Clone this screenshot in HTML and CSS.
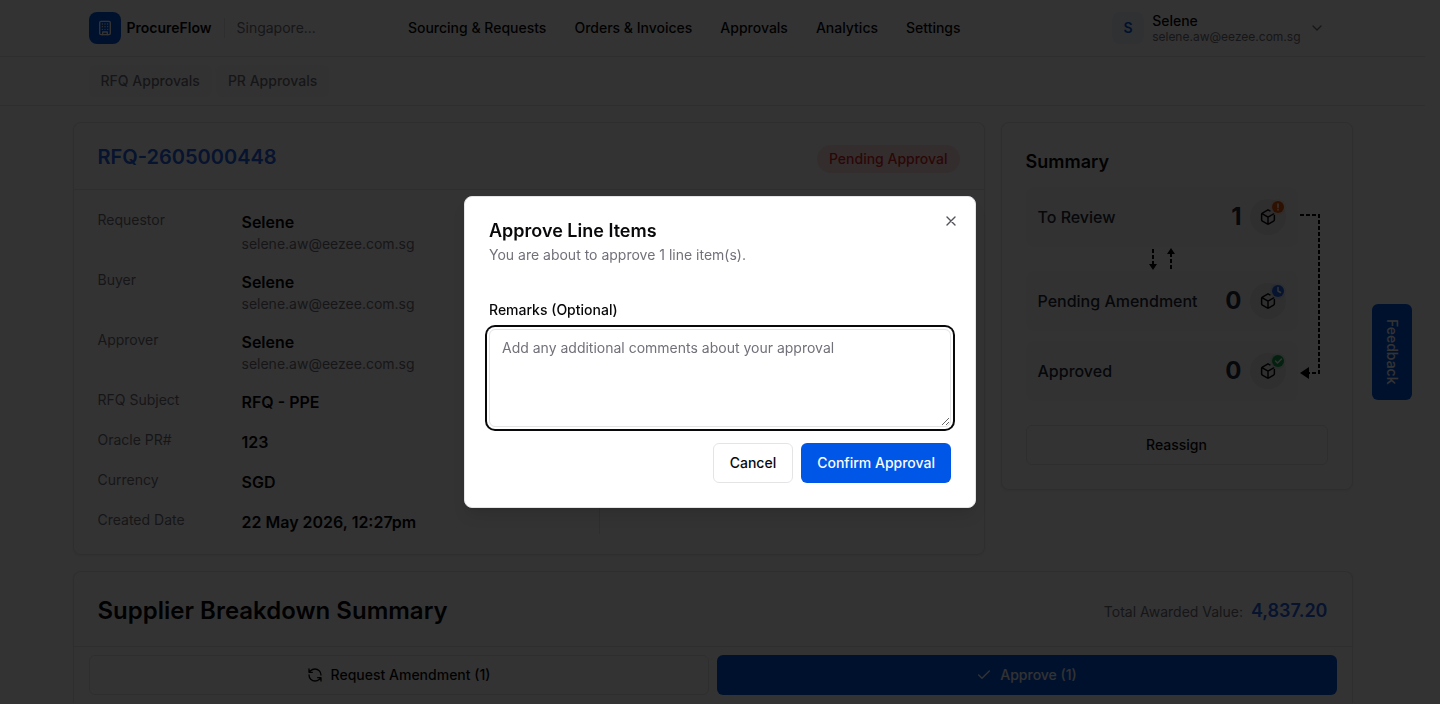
FILE: index.html
```html
<!DOCTYPE html>
<html lang="en">
<head>
<meta charset="utf-8">
<meta name="viewport" content="width=device-width, initial-scale=1">
<title>ProcureFlow – RFQ-2605000448</title>
<link rel="stylesheet" href="styles.css">
</head>
<body>
<svg class="defs" aria-hidden="true">
  <symbol id="box" viewBox="0 0 24 24"><path d="M12 2.500 4.500 6.800A2 2 0 0 0 3.500 8.500v7.300a2 2 0 0 0 1 1.700L11 21.200a2 2 0 0 0 2 0l6.500-3.700a2 2 0 0 0 1-1.700V10M4 7.600l8 4.600 7.500-4.300M12 21.500v-9.300M12 2.500l2.500 1.300"/></symbol>
</svg>
<div class="page">
  <header class="topbar">
    <div class="wrap topbar-inner">
      <div class="brand">
        <span class="logo"><svg viewBox="0 0 24 24"><rect x="4" y="2" width="16" height="20" rx="2"/><path d="M8.500 22v-4h7v4M8 6h.01M16 6h.01M12 6h.01M12 10h.01M12 14h.01M16 10h.01M16 14h.01M8 10h.01M8 14h.01"/></svg></span>
        <span class="brand-name">ProcureFlow</span>
        <span class="brand-org">Singapore...</span>
      </div>
      <nav class="nav">
        <a href="#">Sourcing &amp; Requests</a><a href="#">Orders &amp; Invoices</a><a href="#">Approvals</a><a href="#">Analytics</a><a href="#">Settings</a>
      </nav>
      <button class="user" type="button">
        <span class="avatar">S</span>
        <span class="user-text"><span class="user-name">Selene</span><span class="user-mail">selene.aw@eezee.com.sg</span></span>
        <svg class="chevron" viewBox="0 0 24 24"><path d="m6 9 6 6 6-6"/></svg>
      </button>
    </div>
  </header>
  <div class="subbar">
    <nav class="wrap tabs"><a href="#">RFQ Approvals</a><a href="#">PR Approvals</a></nav>
  </div>
  <main class="main">
    <div class="columns">
      <section class="card">
        <div class="card-head">
          <h1 class="rfq">RFQ-2605000448</h1>
          <span class="badge">Pending Approval</span>
        </div>
        <div class="details">
          <dl class="fields">
            <div class="field"><dt>Requestor</dt><dd>Selene<small>selene.aw@eezee.com.sg</small></dd></div>
            <div class="field"><dt>Buyer</dt><dd>Selene<small>selene.aw@eezee.com.sg</small></dd></div>
            <div class="field"><dt>Approver</dt><dd>Selene<small>selene.aw@eezee.com.sg</small></dd></div>
            <div class="field"><dt>RFQ Subject</dt><dd>RFQ - PPE</dd></div>
            <div class="field"><dt>Oracle PR#</dt><dd>123</dd></div>
            <div class="field"><dt>Currency</dt><dd>SGD</dd></div>
            <div class="field"><dt>Created Date</dt><dd>22 May 2026, 12:27pm</dd></div>
          </dl>
        </div>
      </section>
      <aside class="card summary">
        <h2 class="summary-title">Summary</h2>
        <div class="flow">
          <div class="states">
            <div class="state"><span>To Review</span><b>1</b><span class="state-icon"><svg class="cube"><use href="#box"/></svg><svg class="mark orange" viewBox="0 0 16 16"><circle class="halo" cx="8" cy="8" r="8"/><circle cx="8" cy="8" r="6"/><path d="M8 5v3.500M8 10.600v.4"/></svg></span></div>
            <svg class="swap" viewBox="0 0 28 24"><path class="dash" d="M5 2v15M23 22V7"/><path class="tip" d="M1 17h8l-4 6zM19 7h8l-4-6z"/></svg>
            <div class="state"><span>Pending Amendment</span><b>0</b><span class="state-icon"><svg class="cube"><use href="#box"/></svg><svg class="mark blue" viewBox="0 0 16 16"><circle class="halo" cx="8" cy="8" r="8"/><circle cx="8" cy="8" r="6"/><path d="M8 4.500V8l2.500 1.500"/></svg></span></div>
            <div class="state last"><span>Approved</span><b>0</b><span class="state-icon"><svg class="cube"><use href="#box"/></svg><svg class="mark green" viewBox="0 0 16 16"><circle class="halo" cx="8" cy="8" r="8"/><circle cx="8" cy="8" r="6"/><path d="m5.500 8 2 2 4-4"/></svg></span></div>
          </div>
          <svg class="route" viewBox="0 0 30 214"><path class="dash" d="M2 28h19v158H9"/><path class="tip" d="M2 186l9-6v12z"/></svg>
        </div>
        <button class="btn outline" type="button">Reassign</button>
      </aside>
    </div>
    <section class="card supplier">
      <h2 class="supplier-title">Supplier Breakdown Summary</h2>
      <p class="total">Total Awarded Value: <strong>4,837.20</strong></p>
    </section>
    <div class="actions">
      <button class="btn outline" type="button"><svg viewBox="0 0 24 24"><path d="M21 12a9 9 0 0 0-9-9 9.750 9.750 0 0 0-6.740 2.740L3 8M3 3v5h5M3 12a9 9 0 0 0 9 9 9.750 9.750 0 0 0 6.740-2.740L21 16M16 16h5v5"/></svg>Request Amendment (1)</button>
      <button class="btn primary" type="button"><svg viewBox="0 0 24 24"><path d="M20 6 9 17l-5-5"/></svg>Approve (1)</button>
    </div>
  </main>
  <button class="feedback" type="button">Feedback</button>
</div>
<div class="overlay">
  <form class="dialog" role="dialog" aria-modal="true" aria-labelledby="dialog-title">
    <h2 id="dialog-title" class="dialog-title">Approve Line Items</h2>
    <p class="dialog-text">You are about to approve 1 line item(s).</p>
    <label class="dialog-label" for="remarks">Remarks (Optional)</label>
    <textarea id="remarks" class="remarks" placeholder="Add any additional comments about your approval"></textarea>
    <div class="dialog-actions">
      <button class="btn outline" type="button">Cancel</button>
      <button class="btn primary" type="submit">Confirm Approval</button>
    </div>
    <button class="close" type="button" aria-label="Close"><svg viewBox="0 0 24 24"><path d="M18 6 6 18M6 6l12 12"/></svg></button>
  </form>
</div>
</body>
</html>
```

FILE: styles.css
```css
* { box-sizing: border-box; }
body, h1, h2, p, dl, dd { margin: 0; }
body { background: #fcfcfc; color: #09090b; font: 14px/20px Inter, "Liberation Sans", sans-serif; }
button, textarea { font: inherit; color: inherit; }
button { cursor: pointer; }
a { color: inherit; text-decoration: none; }
svg { fill: none; stroke: currentColor; stroke-width: 2; stroke-linecap: round; stroke-linejoin: round; flex: none; }
.defs { position: absolute; width: 0; height: 0; }
.page { margin-right: 15px; }
.wrap { max-width: 1280px; margin: 0 auto; padding: 0 16px; }

.topbar { background: #fff; border-bottom: 1px solid #e4e4e7; }
.topbar-inner { display: flex; align-items: center; gap: 92px; height: 56px; }
.brand { display: flex; align-items: center; }
.logo { display: grid; place-items: center; width: 32px; height: 32px; border-radius: 8px; background: #0057e7; color: #fff; }
.logo svg { width: 16px; height: 16px; }
.brand-name { margin-left: 6px; font-weight: 600; }
.brand-org { margin-left: 12px; padding-left: 12px; border-left: 1px solid #e4e4e7; color: #71717a; }
.nav { display: flex; gap: 28px; font-weight: 500; }
.user { display: flex; align-items: center; margin-left: auto; gap: 8px; padding: 0 12px; border: 0; background: none; text-align: left; }
.avatar { display: grid; place-items: center; width: 32px; height: 32px; border-radius: 8px; background: #edf3fd; color: #0057e7; font-weight: 600; }
.user-text { display: grid; }
.user-name { font-weight: 500; line-height: 16px; }
.user-mail { font-size: 12px; line-height: 15px; color: #71717a; }
.chevron { width: 16px; height: 16px; color: #71717a; }

.subbar { background: #fff; border-bottom: 1px solid #e4e4e7; }
.tabs { display: flex; gap: 4px; padding-top: 8px; padding-bottom: 8px; color: #71717a; font-weight: 500; }
.tabs a { padding: 6px 12px; border-radius: 6px; background: #fafafa; }

.main { display: grid; gap: 16px; max-width: 1280px; margin: 0 auto; padding-top: 16px; }
.columns { display: grid; grid-template-columns: minmax(0, 1fr) 352px; align-items: start; gap: 16px; }
.card { border: 1px solid #e4e4e7; border-radius: 8px; background: #fff; box-shadow: 0 1px 2px #0000000d; }
.card-head { display: flex; align-items: flex-start; justify-content: space-between; padding: 20px 24px 16px; border-bottom: 1px solid #e4e4e7; }
.rfq { font-size: 20px; line-height: 28px; font-weight: 600; color: #2563eb; }
.badge { margin-top: 2px; padding: 4px 12px; border-radius: 14px; background: #fee2e2; color: #dc2626; font-weight: 500; }
.details { display: grid; grid-template-columns: 7fr 5fr; padding: 20px 24px; }
.fields { display: grid; gap: 16px; border-right: 1px solid #e4e4e7; }
.field { display: grid; grid-template-columns: 144px 1fr; }
.field dt { color: #71717a; }
.field dd { font-size: 16px; line-height: 24px; font-weight: 600; }
.field small { display: block; font-size: 14px; line-height: 20px; font-weight: 400; color: #71717a; }

.summary { display: grid; padding: 24px; }
.summary-title { margin-bottom: 10px; font-size: 18px; line-height: 30px; font-weight: 600; }
.flow { display: flex; margin-bottom: 24px; }
.states { flex: 1; display: grid; }
.state { display: flex; align-items: center; gap: 8px; padding: 12px; border-radius: 8px; background: #fafafa; color: #1f2937; font-size: 16px; line-height: 24px; font-weight: 500; }
.state b { margin-left: auto; font-size: 24px; font-weight: 700; }
.state.last { margin-top: 10px; }
.state-icon { position: relative; display: grid; place-items: center; width: 36px; height: 36px; border-radius: 50%; background: #e9e9eb; color: #09090b; }
.cube { width: 18px; height: 18px; }
.mark { position: absolute; top: 0; right: 0; width: 16px; height: 16px; stroke: none; }
.mark path { fill: none; stroke: #fff; stroke-width: 1.500; }
.orange { fill: #ea580c; }
.blue { fill: #2563eb; }
.green { fill: #16a34a; }
.mark .halo { opacity: .1; }
.swap { justify-self: center; width: 28px; height: 24px; }
.route { width: 30px; height: 214px; }
.dash { stroke: #000; stroke-dasharray: 4 2; stroke-linecap: butt; stroke-linejoin: miter; }
.tip { fill: #000; stroke: none; }

.btn { display: flex; align-items: center; justify-content: center; gap: 8px; height: 40px; padding: 0 16px; border: 1px solid #e4e4e7; border-radius: 6px; background: #fff; font-weight: 500; }
.btn svg { width: 16px; height: 16px; }
.btn.primary { border: 0; background: #0057e7; color: #fafafa; }

.supplier { display: flex; align-items: center; justify-content: space-between; padding: 24px 24px 20px; border-bottom: 0; border-radius: 8px 8px 0 0; }
.supplier-title { font-size: 24px; line-height: 30px; font-weight: 600; }
.total { color: #71717a; }
.total strong { margin-left: 4px; font-size: 18px; font-weight: 600; color: #2563eb; }
.actions { position: sticky; bottom: 0; display: grid; grid-template-columns: 1fr 1fr; gap: 8px; margin-top: -16px; padding: 8px 15px; border: 1px solid #e4e4e7; border-bottom: 0; background: #fff; }
.feedback { position: fixed; top: 50%; right: 28px; transform: translateY(-50%); width: 40px; height: 96px; padding: 0; border: 0; border-radius: 6px; background: #0057e7; color: #fff; font-weight: 500; writing-mode: vertical-rl; }

.overlay { position: fixed; inset: 0; display: flex; align-items: center; justify-content: center; background: #000c; }
.dialog { position: relative; display: grid; width: 100%; max-width: 512px; padding: 24px; border: 1px solid #e4e4e7; border-radius: 8px; background: #fff; box-shadow: 0 10px 15px -3px #0000001a, 0 4px 6px -4px #0000001a; }
.dialog-title { font-size: 18px; line-height: 20px; font-weight: 600; }
.dialog-text { margin-top: 4px; color: #71717a; }
.dialog-label { margin-top: 35px; font-weight: 500; }
.remarks { height: 98px; margin-top: 9px; padding: 8px 12px; border: 1px solid #e4e4e7; border-radius: 6px; background: #fff; outline: 0; box-shadow: 0 0 0 2px #fff, 0 0 0 4px #09090b; resize: vertical; }
.remarks::placeholder { color: #71717a; }
.dialog-actions { display: flex; justify-content: flex-end; gap: 8px; margin-top: 16px; }
.close { position: absolute; top: 16px; right: 16px; display: grid; width: 16px; height: 16px; padding: 0; border: 0; background: none; color: #52525b; }
```
